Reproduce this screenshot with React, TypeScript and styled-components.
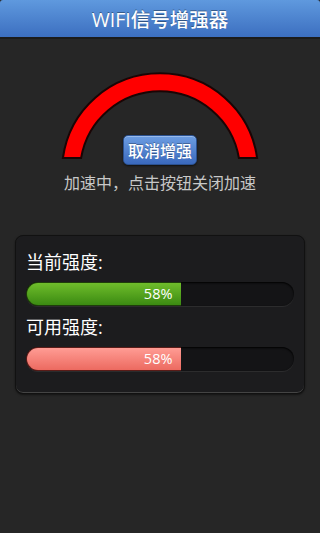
import React from 'react'
import styled, { createGlobalStyle } from 'styled-components'

const GlobalStyle = createGlobalStyle`
    html, body {
        margin: 0;
        padding: 0;
        background-color: #262626;
    }
    body {
        font-family: "Open Sans", "Noto Sans CJK SC", sans-serif;
    }
`

const Page = styled.div`
    width: 320px;
    min-height: 533px;
    background-color: #262626;
    display: flex;
    flex-direction: column;
`

const TitleBar = styled.div`
    height: 37px;
    border-radius: 3px 3px 0 0;
    background: linear-gradient(#5f99de, #3c6fc0);
    border-bottom: 2px solid #1b1b1b;
    display: flex;
    align-items: center;
    justify-content: center;
    color: white;
    font-size: 19.5px;
    font-weight: 500;
    text-shadow: 0 -1px 0 rgba(0, 0, 0, 0.35);
`

const Gauge = styled.div`
    position: relative;
    height: 126px;
    display: flex;
    align-items: flex-end;
    justify-content: center;
`

const Arc = styled.svg`
    position: absolute;
    top: 0;
    left: 0;
`

const StopButton = styled.button`
    position: relative;
    height: 30px;
    padding: 0 4px;
    border: 1px solid #2b518f;
    border-radius: 5px;
    background: linear-gradient(#6c9de2, #3a69bd);
    box-shadow: inset 0 1px 0 rgba(255, 255, 255, 0.3), 0 1px 2px rgba(0, 0, 0, 0.6);
    color: white;
    font-family: "Noto Sans CJK SC", sans-serif;
    font-size: 16px;
    font-weight: 500;
    line-height: 28px;
    text-shadow: 0 -1px 0 rgba(0, 0, 0, 0.3);
`

const Hint = styled.div`
    margin-top: 8px;
    text-align: center;
    color: #c8c8c8;
    font-size: 16px;
    line-height: 20px;
`

const Panel = styled.div`
    margin: 42px 15px 0;
    padding: 14px 10px 22px;
    border: 1px solid #111;
    border-radius: 8px;
    background-color: #1c1c1e;
    box-shadow: inset 0 -1px 0 #444, 0 1px 2px rgba(0, 0, 0, 0.5);
    display: flex;
    flex-direction: column;
`

const Label = styled.div<{ $gap?: number }>`
    margin-top: ${({ $gap }) => $gap ?? 0}px;
    color: white;
    font-size: 18px;
    line-height: 24px;
`

const Track = styled.div`
    margin-top: 8px;
    height: 24px;
    border-radius: 12px;
    background-color: #141416;
    box-shadow: inset 0 1px 2px #000, 0 1px 0 rgba(255, 255, 255, 0.07);
    display: flex;
`

const handleFill: (kind: string) => string = function (kind: string) {
    switch (kind) {
        case 'green':
            return 'linear-gradient(#6fbd2b, #3b8a12)'
        case 'pink':
            return 'linear-gradient(#ff9c94, #ec6a60)'
        default:
            return 'linear-gradient(#6fbd2b, #3b8a12)'
    }
}

const Fill = styled.div<{ $kind: string }>`
    box-sizing: border-box;
    height: 24px;
    padding-right: 9px;
    border: 1px solid ${({ $kind }) => ($kind === 'pink' ? '#5a1c18' : '#1e3d0a')};
    border-right: none;
    border-radius: 12px 0 0 12px;
    background: ${({ $kind }) => handleFill($kind)};
    color: white;
    font-size: 14.5px;
    line-height: 22px;
    text-align: right;
`

function Meter({ kind, value }: { kind: string; value: number }) {
    return (
        <Track>
            <Fill $kind={kind} style={{ width: `${value}%` }}>
                {value}%
            </Fill>
        </Track>
    )
}

function App() {
    return (
        <>
            <GlobalStyle />
            <Page>
                <TitleBar>WIFI信号增强器</TitleBar>

                <Gauge>
                    <Arc width="320" height="126" viewBox="0 39 320 126">
                        <path
                            d="M 62.9 158 A 98 98 0 0 1 257.1 158 L 238.9 158 A 80 80 0 0 0 81.1 158 Z"
                            fill="#ff0000"
                            stroke="#1a0505"
                            strokeWidth="2"
                        />
                    </Arc>
                    <StopButton>取消增强</StopButton>
                </Gauge>

                <Hint>加速中，点击按钮关闭加速</Hint>

                <Panel>
                    <Label>当前强度:</Label>
                    <Meter kind="green" value={58} />
                    <Label $gap={9}>可用强度:</Label>
                    <Meter kind="pink" value={58} />
                </Panel>
            </Page>
        </>
    )
}

export default App
